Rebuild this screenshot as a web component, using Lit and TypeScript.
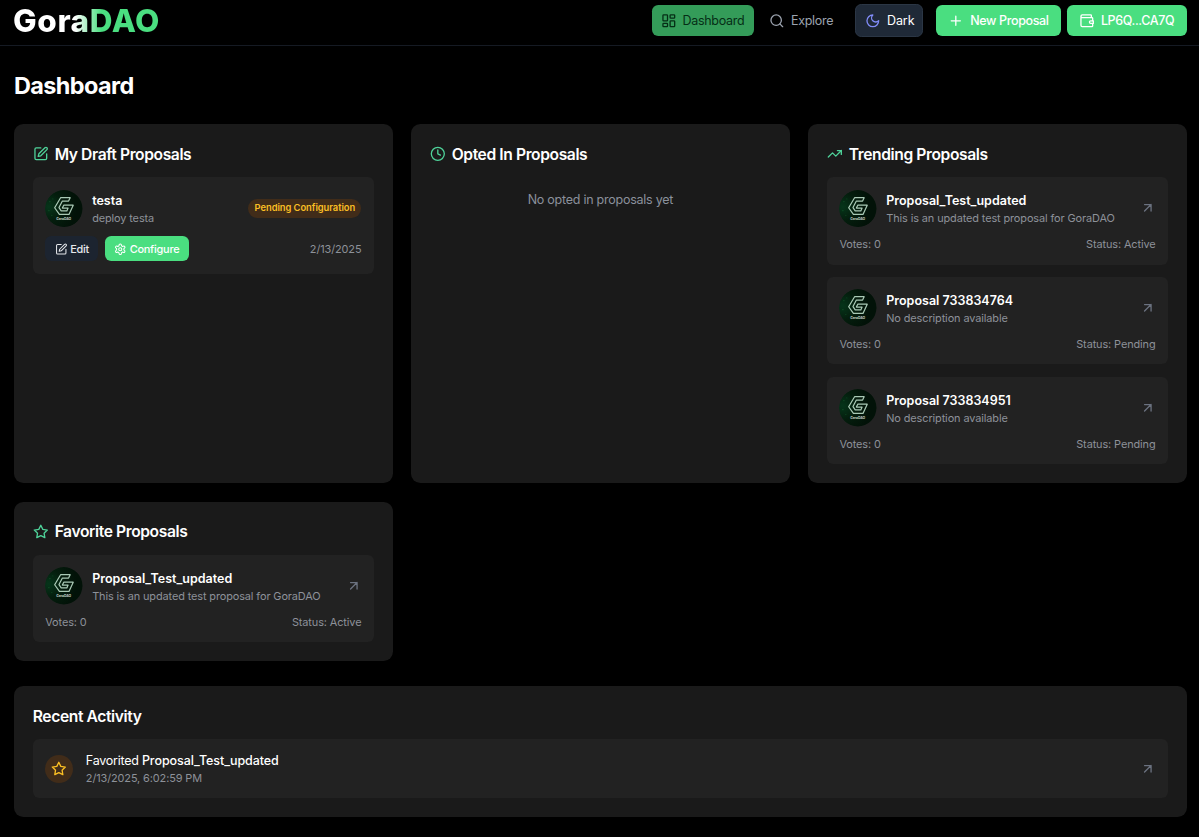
import { LitElement, html, css, svg } from "lit";
import { customElement, property } from "lit/decorators.js";

const icons: Record<string, unknown> = {
  dashboard: svg`<rect x="3" y="3" width="7" height="9" rx="1"/><rect x="14" y="3" width="7" height="5" rx="1"/><rect x="14" y="12" width="7" height="9" rx="1"/><rect x="3" y="16" width="7" height="5" rx="1"/>`,
  search: svg`<circle cx="11" cy="11" r="8"/><path d="m21 21-4.3-4.3"/>`,
  moon: svg`<path d="M12 3a6 6 0 0 0 9 9 9 9 0 1 1-9-9Z"/>`,
  plus: svg`<path d="M5 12h14M12 5v14"/>`,
  wallet: svg`<path d="M19 7V4a1 1 0 0 0-1-1H5a2 2 0 0 0 0 4h15a1 1 0 0 1 1 1v4h-3a2 2 0 0 0 0 4h3v4a1 1 0 0 1-1 1H5a2 2 0 0 1-2-2V5"/><path d="M21 12h1v4h-1"/>`,
  edit: svg`<path d="M12 3H5a2 2 0 0 0-2 2v14a2 2 0 0 0 2 2h14a2 2 0 0 0 2-2v-7"/><path d="M18.375 2.625a2.121 2.121 0 1 1 3 3L12 15l-4 1 1-4Z"/>`,
  clock: svg`<circle cx="12" cy="12" r="10"/><path d="M12 6v6l4 2"/>`,
  trend: svg`<path d="m22 7-8.5 8.5-5-5L2 17"/><path d="M16 7h6v6"/>`,
  star: svg`<path d="m12 2 3.09 6.26L22 9.27l-5 4.87 1.18 6.88L12 17.77l-6.18 3.25L7 14.14 2 9.27l6.91-1.01Z"/>`,
  gear: svg`<path d="M12.22 2h-.44a2 2 0 0 0-2 2v.18a2 2 0 0 1-1 1.73l-.43.25a2 2 0 0 1-2 0l-.15-.08a2 2 0 0 0-2.73.73l-.22.38a2 2 0 0 0 .73 2.73l.15.1a2 2 0 0 1 1 1.72v.51a2 2 0 0 1-1 1.74l-.15.09a2 2 0 0 0-.73 2.73l.22.38a2 2 0 0 0 2.73.73l.15-.08a2 2 0 0 1 2 0l.43.25a2 2 0 0 1 1 1.73V20a2 2 0 0 0 2 2h.44a2 2 0 0 0 2-2v-.18a2 2 0 0 1 1-1.73l.43-.25a2 2 0 0 1 2 0l.15.08a2 2 0 0 0 2.73-.73l.22-.39a2 2 0 0 0-.73-2.73l-.15-.08a2 2 0 0 1-1-1.74v-.5a2 2 0 0 1 1-1.74l.15-.09a2 2 0 0 0 .73-2.73l-.22-.38a2 2 0 0 0-2.73-.73l-.15.08a2 2 0 0 1-2 0l-.43-.25a2 2 0 0 1-1-1.73V4a2 2 0 0 0-2-2z"/><circle cx="12" cy="12" r="3"/>`,
  arrow: svg`<path d="M7 7h10v10M7 17 17 7"/>`,
};

@customElement("ui-icon")
class UiIcon extends LitElement {
  @property() name = "";
  static styles = css`
    :host { display: block; flex: none; width: 15.63px; height: 15.63px; }
    .glyph { display: block; width: 100%; height: 100%; fill: none; stroke: currentColor; stroke-width: 2; stroke-linecap: round; stroke-linejoin: round; }
  `;
  render() {
    return html`<svg class="glyph" viewBox="0 0 24 24">${icons[this.name]}</svg>`;
  }
}

@customElement("dao-avatar")
class DaoAvatar extends LitElement {
  static styles = css`
    :host { display: block; flex: none; width: 37.5px; height: 37.5px; }
    .art { display: block; width: 100%; height: 100%; border-radius: 50%; }
    .mark { fill: none; stroke: #a9c9b5; stroke-width: 1.25; stroke-linejoin: round; }
    .name { font: 700 3.4px Inter, sans-serif; fill: #c3d3c8; }
  `;
  render() {
    return html`<svg class="art" viewBox="0 0 38 38">
      <defs>
        <radialGradient id="glow" cx="0.1" cy="0.45" r="0.75">
          <stop offset="0" stop-color="#06351a" />
          <stop offset="0.5" stop-color="#041d0d" />
          <stop offset="1" stop-color="#021208" />
        </radialGradient>
      </defs>
      <circle cx="19" cy="19" r="19" fill="url(#glow)" />
      <g fill="#1d7a3b"><circle cx="5" cy="12" r=".5" /><circle cx="8" cy="9" r=".4" /><circle cx="4" cy="21" r=".5" /><circle cx="7" cy="26" r=".4" /></g>
      <path class="mark" d="M25.5 7.8H15.8L9.8 18 14.6 24.8H24.3L28.6 15.4H19L17.6 18.3H23.4L22.1 21.2H16.4L14.2 17.8 17.6 11.2H23.9Z" />
      <text class="name" x="19" y="30.4" text-anchor="middle" textLength="15">GoraDAO</text>
    </svg>`;
  }
}

const shared = css`
  .item { background: #222; border-radius: 6.25px; padding: 12.5px; }
  .row { display: flex; align-items: center; }
  .grow { flex: 1; min-width: 0; }
  .name { font-size: 12.5px; line-height: 16.76px; padding-top: 2px; font-weight: 600; color: #fff; }
  .sub { font-size: 10.94px; line-height: 13.63px; padding-top: 2px; color: #8d9199; letter-spacing: -0.12px; }
  .arrow { color: #6b7280; }
`;

@customElement("proposal-item")
class ProposalItem extends LitElement {
  @property() name = "";
  @property() description = "";
  @property() status = "";
  static styles = [shared, css`
    :host { display: block; }
    .head { gap: 9.38px; }
    .foot { justify-content: space-between; margin-top: 9.38px; }
  `];
  render() {
    return html`<div class="item">
      <div class="row head">
        <dao-avatar></dao-avatar>
        <div class="grow">
          <div class="name">${this.name}</div>
          <div class="sub">${this.description}</div>
        </div>
        <ui-icon class="arrow" name="arrow"></ui-icon>
      </div>
      <div class="row foot sub"><span>Votes: 0</span><span>Status: ${this.status}</span></div>
    </div>`;
  }
}

@customElement("app-root")
class AppRoot extends LitElement {
  static styles = [shared, css`
    :host { display: block; min-height: 837px; background: #000; color: #fff; font-family: Inter, sans-serif; font-size: 12.5px; box-sizing: border-box; }
    .bar, .btn, .small, .pill, .theme { box-sizing: border-box; }
    .bar { display: flex; align-items: center; justify-content: space-between; height: 46px; padding: 0 12px 4px 13px; border-bottom: 1px solid #151a23; }
    .logo { font-size: 31.5px; line-height: 40px; font-weight: 800; letter-spacing: 0.6px; background: linear-gradient(90deg, #fff 42%, #4ade80 60%); -webkit-background-clip: text; background-clip: text; color: transparent; }
    .nav { display: flex; align-items: center; }
    .btn { display: flex; align-items: center; gap: 6.25px; height: 31.25px; padding: 0 9.38px; border-radius: 6.25px; font-size: 12.5px; white-space: nowrap; font-weight: 500; letter-spacing: -0.35px; }
    .current { background: #349c59; color: #052e16; font-weight: 400; width: 102px; padding-left: 8.8px; letter-spacing: -0.27px; }
    .plain { color: #9ca3af; font-weight: 400; margin-left: 6px; width: 83px; letter-spacing: -0.3px; }
    .theme { background: #1f2937; border: 1px solid #2b3645; height: 33px; width: 68.5px; margin-left: 12px; font-weight: 400; letter-spacing: -0.1px; }
    .moon { color: #818cf8; }
    .primary { background: #4ade80; color: #fff; padding: 0 12.5px; width: 125px; margin-left: 12.5px; }
    .wallet { width: 120px; margin-left: 6.25px; padding-left: 12px; }
    .page { padding: 0 12.2px 19px 14px; }
    .title { margin: 0; padding: 26px 0 23.4px; font-size: 23.45px; line-height: 28.5px; font-weight: 700; letter-spacing: -0.6px; }
    .grid { display: grid; grid-template-columns: repeat(3, 1fr); gap: 18.7px 18.4px; }
    .card { background: #1a1a1a; border-radius: 9.38px; padding: 18.76px; min-width: 0; }
    .heading { display: flex; align-items: center; gap: 6.25px; margin: 0 0 12.5px; font-size: 15.63px; line-height: 21.88px; font-weight: 600; letter-spacing: -0.4px; }
    .label { line-height: 19.88px; padding-top: 2px; }
    .accent { color: #4fd39a; }
    .list { display: flex; flex-direction: column; gap: 12.4px; }
    .empty { text-align: center; color: #8b919c; padding: 14.5px 0 12.5px; line-height: 16.76px; letter-spacing: -0.25px; }
    .gap { gap: 9.38px; }
    .pill { background: #412c19; color: #fbbf24; font-size: 9.38px; line-height: 12.5px; font-weight: 600; border-radius: 99px; padding: 3.1px 6.25px; letter-spacing: -0.06px; }
    .actions { gap: 6.25px; margin-top: 9.38px; }
    .small { display: flex; align-items: center; gap: 3.1px; height: 25px; padding: 0 9.38px; border-radius: 6.25px; font-size: 10.94px; font-weight: 500; color: #e5e7eb; background: #1c2430; letter-spacing: -0.25px; }
    .go { background: #4ade80; color: #fff; }
    .tiny { width: 12.5px; height: 12.5px; }
    .date { margin-left: auto; }
    .recent { margin-top: 24.7px; }
    .badge { display: grid; place-items: center; width: 28.1px; height: 28.1px; border-radius: 50%; background: #412c19; color: #fbbf24; margin-right: 12.5px; }
    .event { font-weight: 500; letter-spacing: -0.06px; }
    .verb { font-weight: 400; letter-spacing: -0.25px; }
  `];
  render() {
    return html`
      <header class="bar">
        <div class="logo">GoraDAO</div>
        <nav class="nav">
          <div class="btn current"><ui-icon name="dashboard"></ui-icon><span>Dashboard</span></div>
          <div class="btn plain"><ui-icon name="search"></ui-icon><span>Explore</span></div>
          <div class="btn theme"><ui-icon class="moon" name="moon"></ui-icon><span>Dark</span></div>
          <div class="btn primary"><ui-icon name="plus"></ui-icon><span>New Proposal</span></div>
          <div class="btn primary wallet"><ui-icon name="wallet"></ui-icon><span>LP6Q...CA7Q</span></div>
        </nav>
      </header>
      <main class="page">
        <h1 class="title">Dashboard</h1>
        <div class="grid">
          <section class="card">
            <h2 class="heading"><ui-icon class="accent" name="edit"></ui-icon><span class="label">My Draft Proposals</span></h2>
            <div class="item">
              <div class="row gap">
                <dao-avatar></dao-avatar>
                <div class="grow"><div class="name">testa</div><div class="sub">deploy testa</div></div>
                <span class="pill">Pending Configuration</span>
              </div>
              <div class="row actions">
                <div class="small"><ui-icon class="tiny" name="edit"></ui-icon><span>Edit</span></div>
                <div class="small go"><ui-icon class="tiny" name="gear"></ui-icon><span>Configure</span></div>
                <span class="sub date">2/13/2025</span>
              </div>
            </div>
          </section>
          <section class="card">
            <h2 class="heading"><ui-icon class="accent" name="clock"></ui-icon><span class="label">Opted In Proposals</span></h2>
            <div class="empty">No opted in proposals yet</div>
          </section>
          <section class="card">
            <h2 class="heading"><ui-icon class="accent" name="trend"></ui-icon><span class="label">Trending Proposals</span></h2>
            <div class="list">
              <proposal-item name="Proposal_Test_updated" description="This is an updated test proposal for GoraDAO" status="Active"></proposal-item>
              <proposal-item name="Proposal 733834764" description="No description available" status="Pending"></proposal-item>
              <proposal-item name="Proposal 733834951" description="No description available" status="Pending"></proposal-item>
            </div>
          </section>
          <section class="card">
            <h2 class="heading"><ui-icon class="accent" name="star"></ui-icon><span class="label">Favorite Proposals</span></h2>
            <proposal-item name="Proposal_Test_updated" description="This is an updated test proposal for GoraDAO" status="Active"></proposal-item>
          </section>
        </div>
        <section class="card recent">
          <h2 class="heading"><span class="label">Recent Activity</span></h2>
          <div class="item row">
            <div class="badge"><ui-icon name="star"></ui-icon></div>
            <div class="grow">
              <div class="name event"><span class="verb">Favorited </span>Proposal_Test_updated</div>
              <div class="sub">2/13/2025, 6:02:59 PM</div>
            </div>
            <ui-icon class="arrow" name="arrow"></ui-icon>
          </div>
        </section>
      </main>`;
  }
}
